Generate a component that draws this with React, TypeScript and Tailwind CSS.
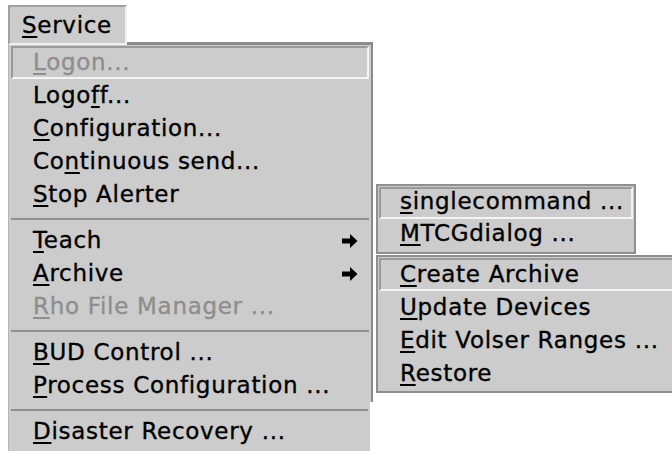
import React from "react";

type Item = {
  pre?: string;
  k: string;
  post: string;
  disabled?: boolean;
  focused?: boolean;
  arrow?: boolean;
};

const Label = ({ pre, k, post }: { pre?: string; k: string; post: string }) => (
  <span className="whitespace-pre">
    {pre}
    <span className="underline decoration-2 underline-offset-[3px] [text-decoration-skip-ink:none]">
      {k}
    </span>
    {post}
  </span>
);

const Arrow = () => (
  <svg width="16" height="14" viewBox="0 0 16 14" className="ml-auto shrink-0">
    <path d="M0 4.5 H8 V0 L15.5 7 L8 14 V9.5 H0 Z" fill="#000" />
  </svg>
);

const Row = ({ item, h, pl }: { item: Item; h: string; pl: string }) => (
  <div
    className={`flex items-center border-2 pr-[9px] ${h} ${pl} ${
      item.focused
        ? "border-t-[#9a9a9a] border-l-[#9a9a9a] border-b-[#f4f4f4] border-r-[#f4f4f4]"
        : "border-transparent"
    } ${item.disabled ? "text-[#8e8e8e]" : "text-black"}`}
  >
    <Label pre={item.pre} k={item.k} post={item.post} />
    {item.arrow && <Arrow />}
  </div>
);

const Separator = () => (
  <div className="mx-[2px] mt-[7px] mb-[4px] h-[2px] bg-[#909090]" />
);

const group1: Item[] = [
  { k: "L", post: "ogon...", disabled: true, focused: true },
  { pre: "Logo", k: "f", post: "f..." },
  { k: "C", post: "onfiguration..." },
  { pre: "Co", k: "n", post: "tinuous send..." },
  { k: "S", post: "top Alerter" },
];

const group2: Item[] = [
  { k: "T", post: "each", arrow: true },
  { k: "A", post: "rchive", arrow: true },
  { k: "R", post: "ho File Manager ...", disabled: true },
];

const group3: Item[] = [
  { k: "B", post: "UD Control ..." },
  { k: "P", post: "rocess Configuration ..." },
];

const teachItems: Item[] = [
  { k: "s", post: "inglecommand ...", focused: true },
  { k: "M", post: "TCGdialog ..." },
];

const archiveItems: Item[] = [
  { k: "C", post: "reate Archive", focused: true },
  { k: "U", post: "pdate Devices" },
  { k: "E", post: "dit Volser Ranges ..." },
  { k: "R", post: "estore" },
];

export default function App() {
  const mainRow = (it: Item, i: number) => (
    <Row key={i} item={it} h="h-[33px] leading-[29px]" pl="pl-[20px]" />
  );

  return (
    <div
      className="relative w-[672px] h-[451px] overflow-hidden bg-white pt-[5px] pl-[8px] text-[23px] tracking-[0.7px] [-webkit-text-stroke:0.35px]"
      style={{ fontFamily: '"DejaVu Sans", "Liberation Sans", sans-serif' }}
    >
      {/* menubar */}
      <div className="relative z-10 -mb-[3px] flex h-[40px] w-[119px] items-start border-2 border-t-[#a0a0a0] border-l-[#a0a0a0] border-b-[#f0f0f0] border-r-[#f0f0f0] bg-[#cccccc] pl-[12px] leading-[37px] text-black">
        <Label k="S" post="ervice" />
      </div>

      {/* main pulldown */}
      <div className="flex flex-col">
        <div className="w-[365px] border-t-[3px] border-t-[#8c8c8c] border-l border-l-[#b4b4b4] border-r-2 border-r-[#8a8a8a] bg-[#cccccc] pt-[1px]">
          <div className="mx-[2px]">{group1.map(mainRow)}</div>
          <Separator />
          <div className="mx-[2px]">{group2.map(mainRow)}</div>
          <Separator />
          <div className="mx-[2px]">{group3.map(mainRow)}</div>
        </div>
        <div className="w-[362px] border-l border-l-[#b4b4b4] bg-[#cccccc] pb-[3px]">
          <Separator />
          <div className="mx-[2px]">
            {mainRow({ k: "D", post: "isaster Recovery ..." }, 0)}
          </div>
        </div>
      </div>

      {/* Teach cascade */}
      <div className="absolute left-[376px] top-[184px] w-[260px] border-2 border-[#8f8f8f] bg-[#cccccc] p-[1px]">
        {teachItems.map((it, i) => (
          <Row key={i} item={it} h="h-[32px] leading-[25px] pb-[3px]" pl="pl-[19px]" />
        ))}
      </div>

      {/* Archive cascade */}
      <div className="absolute left-[376px] top-[255px] w-[320px] border-2 border-[#8f8f8f] bg-[#cccccc] p-[1px]">
        {archiveItems.map((it, i) => (
          <Row key={i} item={it} h="h-[33px] leading-[28px] pb-[1px]" pl="pl-[19px]" />
        ))}
      </div>
    </div>
  );
}
